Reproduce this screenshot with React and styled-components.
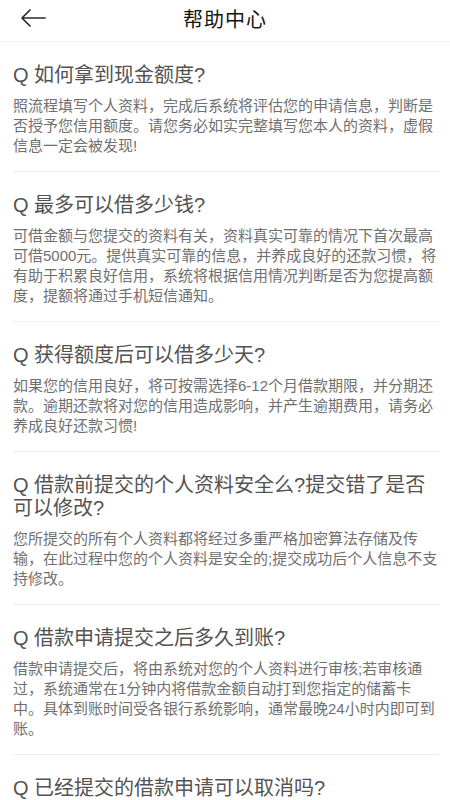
import styled, { createGlobalStyle } from 'styled-components';

const GlobalStyle = createGlobalStyle`
    html, body {
        margin: 0;
        padding: 0;
        background: #ffffff;
    }
    body {
        font-family: "Liberation Sans", "Noto Sans CJK SC", sans-serif;
    }
`

const Page = styled.div`
    width: 450px;
    min-height: 800px;
    background: #ffffff;
`

const Header = styled.header`
    position: relative;
    height: 41px;
    display: flex;
    align-items: center;
    justify-content: center;
    border-bottom: 1px solid #f0f0f0;
`

const BackButton = styled.button`
    position: absolute;
    left: 18px;
    top: 6px;
    width: 30px;
    height: 24px;
    padding: 0;
    border: none;
    background: none;
    display: flex;
    align-items: center;
    justify-content: center;
`

const HeaderTitle = styled.h1`
    margin: 0 0 4px;
    font-size: 20px;
    font-weight: 400;
    letter-spacing: 1px;
    color: #141414;
`

const List = styled.main`
    padding: 0 11px 0 13px;
`

const Item = styled.section`
    padding: 22px 0 15px;
    border-bottom: 1px solid #efefef;
`

const Question = styled.h2`
    margin: 0 0 9px;
    font-size: 20px;
    line-height: 23px;
    font-weight: 400;
    color: #535353;
`

const Answer = styled.p`
    margin: 0;
    font-size: 15px;
    line-height: 20px;
    color: #707070;
`

const faqs = [
    {
        q: 'Q 如何拿到现金额度?',
        a: '照流程填写个人资料，完成后系统将评估您的申请信息，判断是否授予您信用额度。请您务必如实完整填写您本人的资料，虚假信息一定会被发现!',
    },
    {
        q: 'Q 最多可以借多少钱?',
        a: '可借金额与您提交的资料有关，资料真实可靠的情况下首次最高可借5000元。提供真实可靠的信息，并养成良好的还款习惯，将有助于积累良好信用，系统将根据信用情况判断是否为您提高额度，提额将通过手机短信通知。',
    },
    {
        q: 'Q 获得额度后可以借多少天?',
        a: '如果您的信用良好，将可按需选择6-12个月借款期限，并分期还款。逾期还款将对您的信用造成影响，并产生逾期费用，请务必养成良好还款习惯!',
    },
    {
        q: 'Q 借款前提交的个人资料安全么?提交错了是否可以修改?',
        a: '您所提交的所有个人资料都将经过多重严格加密算法存储及传输，在此过程中您的个人资料是安全的;提交成功后个人信息不支持修改。',
    },
    {
        q: 'Q 借款申请提交之后多久到账?',
        a: '借款申请提交后，将由系统对您的个人资料进行审核;若审核通过，系统通常在1分钟内将借款金额自动打到您指定的储蓄卡中。具体到账时间受各银行系统影响，通常最晚24小时内即可到账。',
    },
    {
        q: 'Q 已经提交的借款申请可以取消吗?',
        a: '借款申请一经提交，系统将立即进入审核流程，暂不支持取消，请您确认信息无误后再提交。',
    },
]

const BackArrow = () => (
    <svg width="28" height="20" viewBox="0 0 28 20" fill="none">
        <path d="M26 10H3M11 2L3 10L11 18" stroke="#2a2a2a" strokeWidth="1.7" strokeLinecap="round" strokeLinejoin="round" />
    </svg>
)

const App = () => {
    return (
        <>
            <GlobalStyle />
            <Page>
                <Header>
                    <BackButton aria-label="返回">
                        <BackArrow />
                    </BackButton>
                    <HeaderTitle>帮助中心</HeaderTitle>
                </Header>
                <List>
                    {faqs.map((item) => (
                        <Item key={item.q}>
                            <Question>{item.q}</Question>
                            <Answer>{item.a}</Answer>
                        </Item>
                    ))}
                </List>
            </Page>
        </>
    )
}

export default App;
